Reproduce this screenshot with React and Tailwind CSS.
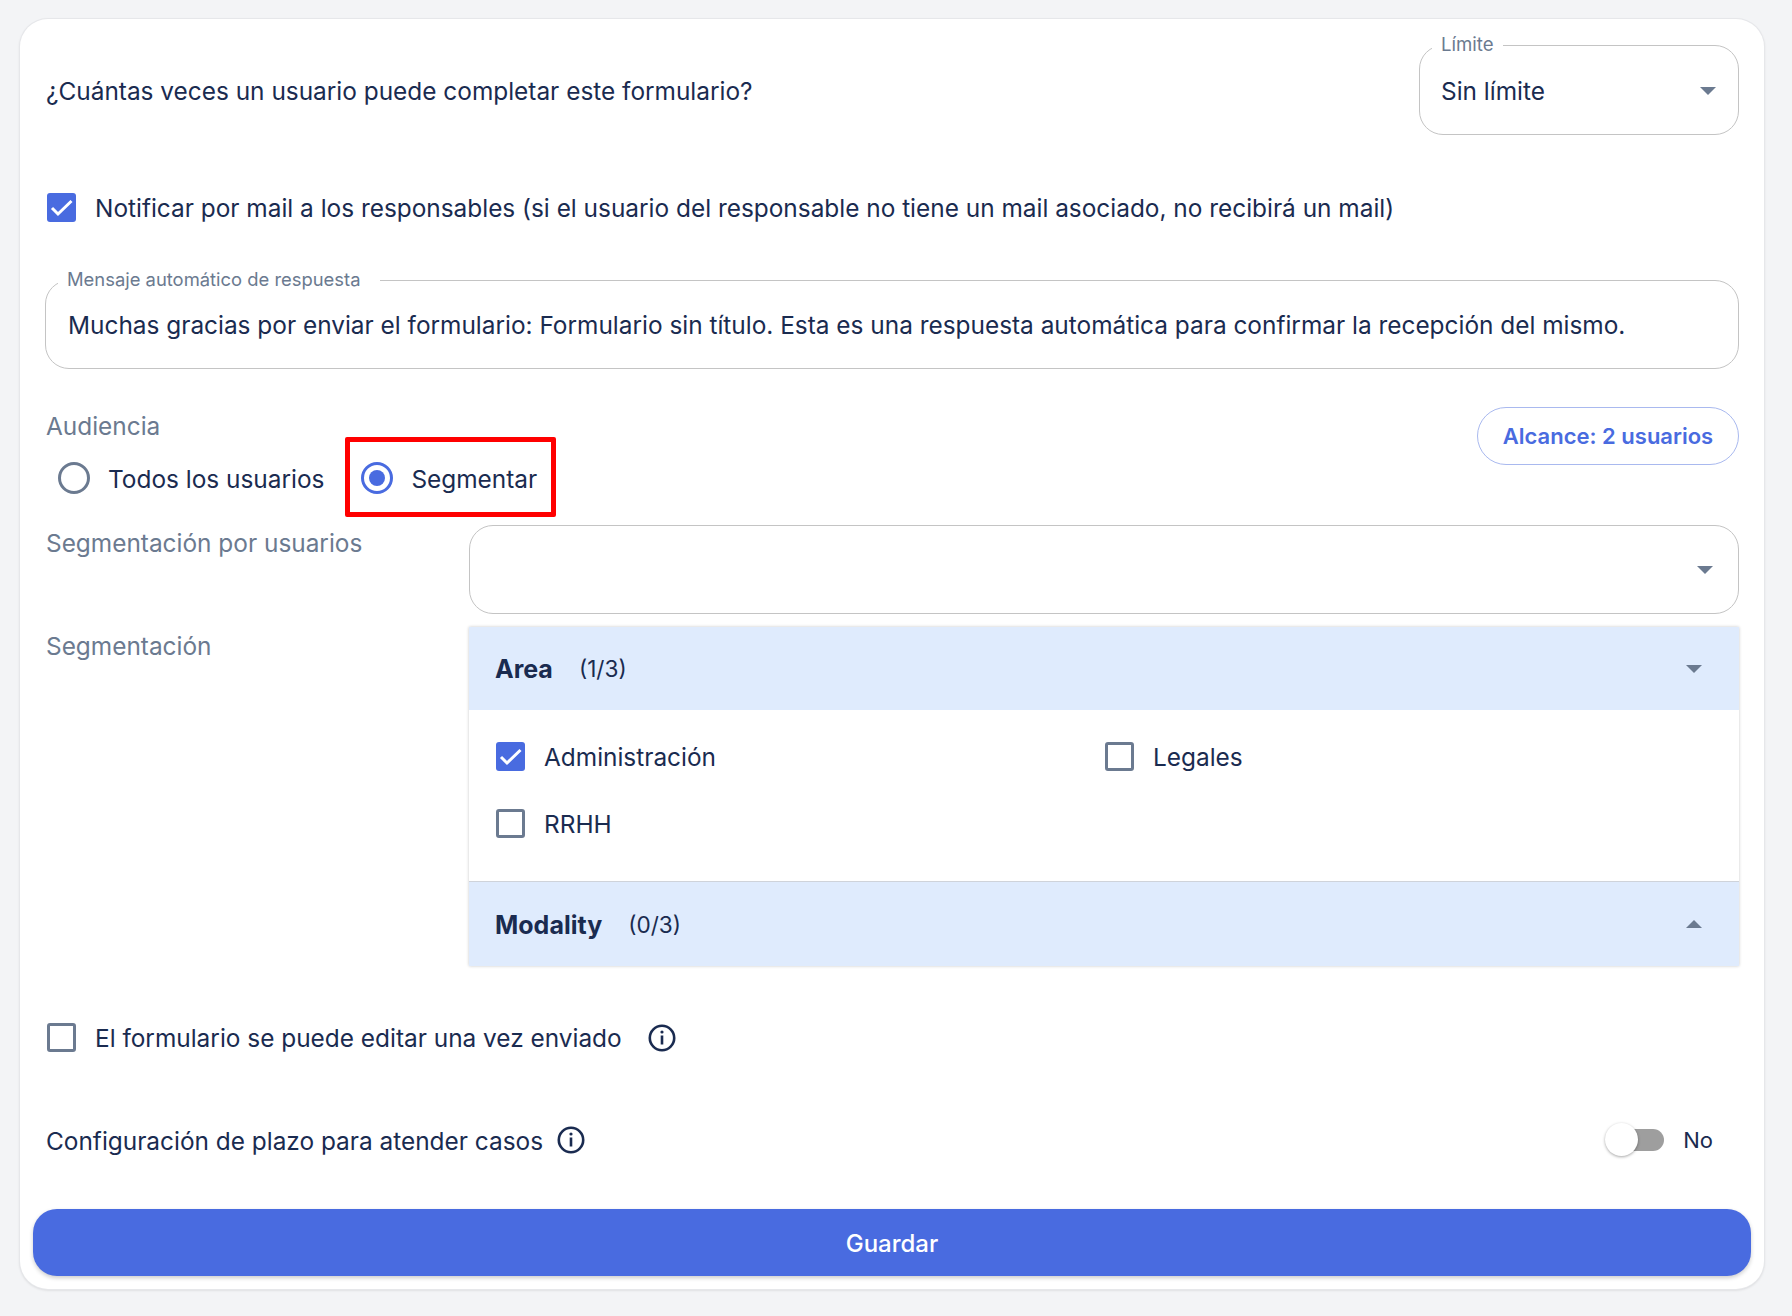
const INK = "text-[#1a2b50]";

function Caret({ up = false }) {
  return (
    <svg width="16" height="8" viewBox="0 0 16 8" className="shrink-0 text-[#6b7a90]" fill="currentColor">
      {up ? <path d="M0 8 8 0l8 8z" /> : <path d="M0 0h16L8 8z" />}
    </svg>
  );
}

function Check({ on = false }) {
  return (
    <span className={`flex h-[29px] w-[29px] shrink-0 items-center justify-center rounded-[3px] ${on ? "bg-[#496be0]" : "border-[3px] border-[#6b7a90] bg-white"}`}>
      {on && (
        <svg width="29" height="29" viewBox="0 0 29 29" fill="none" stroke="white" strokeWidth="3">
          <path d="M5 15 11 21 24.5 8" />
        </svg>
      )}
    </span>
  );
}

function Radio({ on = false }) {
  return (
    <span className={`flex h-[32px] w-[32px] shrink-0 items-center justify-center rounded-full border-[3px] bg-white ${on ? "border-[#496be0]" : "border-[#6b7a90]"}`}>
      {on && <span className="h-[16px] w-[16px] rounded-full bg-[#496be0]" />}
    </span>
  );
}

function Info() {
  return (
    <svg width="28" height="28" viewBox="0 0 28 28" fill="none" className="shrink-0 text-[#1a2b50]" stroke="currentColor">
      <circle cx="14" cy="14" r="12.2" strokeWidth="2.6" />
      <path d="M14 11.5v9" strokeWidth="2.6" />
      <circle cx="14" cy="8" r="1.6" fill="currentColor" stroke="none" />
    </svg>
  );
}

function Accordion({ title, count, up, height }) {
  return (
    <div className={`flex items-center justify-between bg-[#dfebfd] pl-[26px] pr-[37px] ${height} ${INK}`}>
      <div className="flex items-center pt-[2px]">
        <span className="text-[25px] font-bold leading-none">{title}</span>
        <span className="ml-[26px] text-[22.6px] leading-none">{count}</span>
      </div>
      <Caret up={up} />
    </div>
  );
}

export default function App() {
  return (
    <div className={`min-h-[1316px] bg-[#f3f4f6] pl-[20px] pr-[28px] pt-[19px] ${INK}`} style={{ fontFamily: "Inter, 'Noto Sans', sans-serif" }}>
      <div className="h-[1270px] rounded-[28px] bg-white pl-[26px] pr-[25px] pt-[26px] shadow-[0_0_0_1px_#e6e7ea,0_1px_3px_rgba(0,0,0,0.16)]">
        {/* limit */}
        <div className="flex items-center justify-between">
          <div className="pt-[3px] text-[24.4px] leading-none">¿Cuántas veces un usuario puede completar este formulario?</div>
          <div className="relative flex h-[90px] w-[320px] items-center justify-between rounded-[24px] border border-[#c4c4c4] pl-[21px] pr-[22px]">
            <span className="absolute left-[12px] top-[-12px] bg-white pl-[9px] pr-[9px] text-[18.6px] leading-[20px] text-[#6b7a90]">Límite</span>
            <span className="pt-[3px] text-[24.4px] leading-none">Sin límite</span>
            <span className="pt-[2px]"><Caret /></span>
          </div>
        </div>

        {/* notify */}
        <div className="mt-[58px] flex items-center gap-[19px] pl-[1px]">
          <Check on />
          <span className="pt-[1px] text-[24.4px] leading-none">
            Notificar por mail a los responsables (si el usuario del responsable no tiene un mail asociado, no recibirá un mail)
          </span>
        </div>

        {/* message */}
        <div className="relative ml-[-1px] mt-[58px] flex h-[89px] items-center rounded-[24px] border border-[#c4c4c4] pl-[22px]">
          <span className="absolute left-[12px] top-[-12px] bg-white pl-[9px] pr-[20px] text-[18.4px] leading-[20px] text-[#6b7a90]">Mensaje automático de respuesta</span>
          <span className="pt-[2px] text-[24.4px] leading-none">
            Muchas gracias por enviar el formulario: Formulario sin título. Esta es una respuesta automática para confirmar la recepción del mismo.
          </span>
        </div>

        {/* audience */}
        <div className="mt-[38px] flex items-start justify-between">
          <div>
            <div className="mb-[24px] mt-[7px] text-[24.4px] leading-[24px] text-[#6b7a90]">Audiencia</div>
            <div className="flex items-center">
              <label className="ml-[12px] flex items-center gap-[18px]">
                <Radio />
                <span className="pt-[2px] text-[24.4px] leading-none">Todos los usuarios</span>
              </label>
              <label className="relative ml-[37px] flex items-center gap-[18px]">
                <Radio on />
                <span className="pt-[2px] text-[24.4px] leading-none">Segmentar</span>
                <span className="absolute left-[-16px] right-[-19px] top-[-25px] bottom-[-23px] rounded-[2px] border-[5px] border-[#ff0000]" />
              </label>
            </div>
          </div>
          <div className="flex h-[58px] w-[262px] items-center justify-center rounded-[29px] border border-[#a9b9ef] text-[22px] font-semibold leading-none text-[#496be0]">Alcance: 2 usuarios</div>
        </div>

        {/* segmentation */}
        <div className="mt-[31px] grid grid-cols-[423px_1fr]">
          <div className="mt-[6px] text-[24.4px] leading-[24px] text-[#6b7a90]">Segmentación por usuarios</div>
          <div className="flex h-[89px] items-center justify-end rounded-[24px] border border-[#c4c4c4] pr-[25px]">
            <Caret />
          </div>
        </div>

        <div className="mt-[13px] grid grid-cols-[423px_1fr]">
          <div className="mt-[7px] text-[24.4px] leading-[24px] text-[#6b7a90]">Segmentación</div>
          <div className="shadow-[0_0_3px_rgba(0,0,0,0.22)]">
            <Accordion title="Area" count="(1/3)" height="h-[83px]" />
            <div className="grid h-[171px] grid-cols-[609px_1fr] content-start gap-y-[38px] bg-white pl-[27px] pt-[32px]">
              <label className="flex items-center gap-[19px]"><Check on /><span className="pt-[2px] text-[24.4px] leading-none">Administración</span></label>
              <label className="flex items-center gap-[19px]"><Check /><span className="pt-[2px] text-[24.4px] leading-none">Legales</span></label>
              <label className="flex items-center gap-[19px]"><Check /><span className="pt-[2px] text-[24.4px] leading-none">RRHH</span></label>
            </div>
            <div className="border-t border-[#cfd3da]">
              <Accordion title="Modality" count="(0/3)" up height="h-[84px]" />
            </div>
          </div>
        </div>

        {/* editable */}
        <div className="mt-[57px] flex items-center pl-[1px]">
          <Check />
          <span className="ml-[19px] pt-[2px] text-[24.4px] leading-none">El formulario se puede editar una vez enviado</span>
          <span className="ml-[26px]"><Info /></span>
        </div>

        {/* deadline */}
        <div className="mt-[74px] flex items-center justify-between">
          <div className="flex items-center">
            <span className="pt-[2px] text-[24.4px] leading-none">Configuración de plazo para atender casos</span>
            <span className="ml-[14px]"><Info /></span>
          </div>
          <div className="flex items-center pr-[26px]">
            <span className="relative h-[22px] w-[52px] rounded-full bg-[#9e9e9e]">
              <span className="absolute left-[-7px] top-[-6px] h-[33px] w-[33px] rounded-full bg-white shadow-[0_1px_3px_rgba(0,0,0,0.35)]" />
            </span>
            <span className="ml-[19px] text-[22px] leading-none">No</span>
          </div>
        </div>

        {/* save */}
        <div className="ml-[-13px] mr-[-12px] mt-[55px]">
          <button className="flex h-[67px] w-full items-center justify-center rounded-[24px] bg-[#496be0] pt-[2px] text-[24px] font-medium text-white shadow-[0_2px_4px_rgba(0,0,0,0.2)]">Guardar</button>
        </div>
      </div>
    </div>
  );
}
